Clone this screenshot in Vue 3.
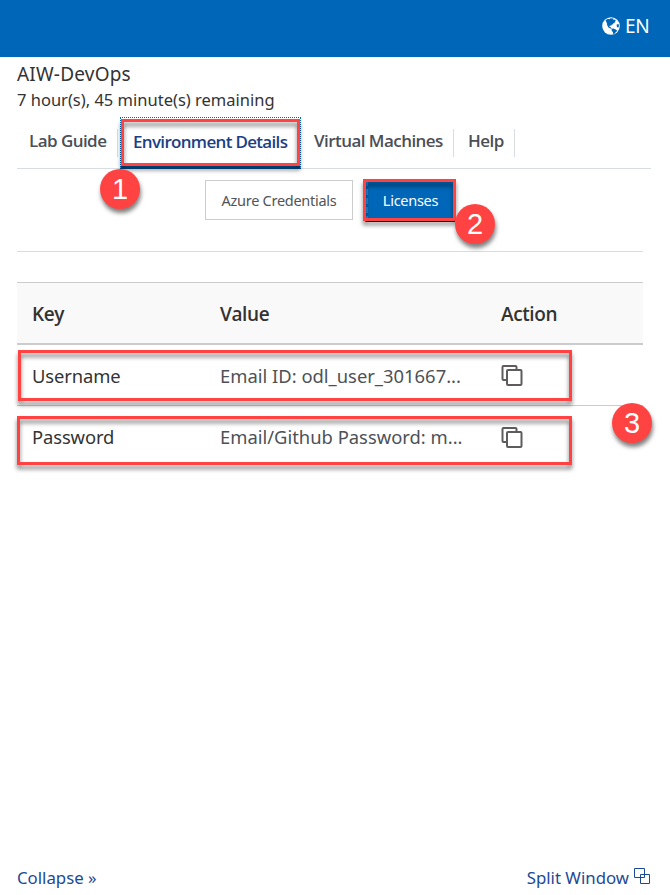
<script setup>
const tabs = [
  { id: 'guide', label: 'Lab Guide' },
  { id: 'env', label: 'Environment Details', active: true },
  { id: 'vms', label: 'Virtual Machines' },
  { id: 'help', label: 'Help' },
]
const rows = [
  { id: 'user', key: 'Username', value: 'Email ID: odl_user_301667...' },
  { id: 'pass', key: 'Password', value: 'Email/Github Password: m...' },
]
</script>

<template>
  <div class="page">
    <header class="topbar">
      <svg class="globe" viewBox="0 0 18 18">
        <circle cx="9" cy="9" r="8.8" fill="#fff" />
        <path d="M3.500 3.200 6 1.800l1.500.4 1-.9 3 .2-.8 1.100 1.800-.2 1.600 1.700-1.300.2.600 1-1.600.6-1 1.300-1.500.9.100 1-1-.6-1 .6.300 1 1-.2.300 1.200 1 .6 1.500-.3 1.600.9 1.900.9-.5 1.600-1.300.9-.9 1.300-1.100.3-.3-2.200-1.300-1.300.2-1.600-1.700-.9-1.700-.9-1.200-2.200-.4-2.300zM14.700 7.500l1.800-.6.5 2.200-.8 1.600-1.400-1z" fill="#0067b8" />
      </svg>
      <span class="lang">EN</span>
    </header>

    <section class="intro">
      <div class="title">AIW-DevOps</div>
      <div class="time">7 hour(s), 45 minute(s) remaining</div>
    </section>

    <nav class="tabs">
      <a v-for="t in tabs" :key="t.id" class="tab" :class="[t.id, { active: t.active }]">
        <span>{{ t.label }}</span>
        <i v-if="t.active" class="mark mark-tab"></i>
        <b v-if="t.active" class="badge badge-one">1</b>
      </a>
    </nav>

    <div class="subtabs">
      <button class="btn">Azure Credentials</button>
      <button class="btn primary">
        <span>Licenses</span>
        <i class="mark mark-btn"></i>
        <b class="badge badge-two">2</b>
      </button>
    </div>

    <div class="table">
      <div class="row head">
        <span class="cell">Key</span><span class="cell">Value</span><span class="cell">Action</span>
      </div>
      <div v-for="r in rows" :key="r.id" class="row" :class="r.id">
        <span class="cell name">{{ r.key }}</span>
        <span class="cell value">{{ r.value }}</span>
        <span class="cell">
          <svg class="copy" viewBox="0 0 22 22" fill="none" stroke="#5c5c5c" stroke-width="2">
            <path d="M5 16H2.500Q1.500 16 1.500 15V3Q1.500 2 2.500 2H14.500Q15.500 2 15.500 3V5" />
            <rect x="6" y="6" width="14.500" height="15" rx="1" />
          </svg>
        </span>
        <i class="mark mark-row"></i>
      </div>
      <b class="badge badge-three">3</b>
    </div>

    <footer class="footer">
      <a class="collapse">Collapse »</a>
      <a class="split"><span>Split Window</span>
        <svg class="windows" viewBox="0 0 17 17" fill="none" stroke="#1b4a96">
          <path d="M.5.5h10v9H.5zM6.500 6.500h9v9h-9z" />
        </svg>
      </a>
    </footer>
  </div>
</template>

<style>
body { background: #fff; }
</style>

<style scoped>
* { box-sizing: border-box; }
.page {
  width: 670px; height: 895px; display: flex; flex-direction: column;
  font-family: "Noto Sans", "Open Sans", sans-serif; color: #333; white-space: nowrap; overflow: hidden;
}
.topbar {
  height: 57px; flex: none; background: #0067b8; color: #fff; display: flex;
  align-items: center; padding: 0 0 5px 602px; gap: 5px;
}
.globe { width: 18px; height: 18px; flex: none; }
.lang { font-size: 19px; letter-spacing: -0.3px; }
.intro { padding: 4px 17px 0; height: 60px; flex: none; }
.title { font-size: 19px; line-height: 27px; letter-spacing: 0.2px; }
.time { font-size: 16.5px; line-height: 23px; }
.tabs {
  display: flex; flex: none; width: 634px; height: 52px; margin-left: 17px; border-bottom: 1px solid #dadce3;
}
.tab {
  position: relative; height: 28px; margin-top: 12px; border-right: 1px solid #dadce3;
  font-family: "Open Sans", "Noto Sans", sans-serif;
  font-size: 17px; font-weight: 600; line-height: 24px; color: #4b4f56; letter-spacing: -0.55px;
}
.guide { width: 101px; padding-left: 12px; }
.env { width: 181px; margin-left: 2px; padding-left: 12px; letter-spacing: -0.68px; }
.vms { width: 153px; padding-left: 13px; }
.help { width: 61px; padding-left: 14px; }
.tab.active {
  margin-top: 0; height: 52px; border: 1px dotted #0067b8; border-bottom: 3px solid #004e8c;
  color: #1b3f86; line-height: 48px;
}
.subtabs {
  display: flex; flex: none; gap: 12px; width: 626px; height: 83px; margin-left: 17px; padding: 11px 0 0 188px;
  border-bottom: 1px solid #dcdcdc;
}
.btn {
  position: relative; width: 148px; height: 40px; padding: 0 0 1px; border: 1px solid #ccc; background: #fff;
  font: 14.5px/36px "Noto Sans", "Open Sans", sans-serif; color: #505459; letter-spacing: -0.28px;
}
.primary {
  width: 90px; height: 42px; background: #0067b8; color: #fff; border: 0; border-left: 3px dashed #2386d4;
  border-bottom: 1px solid #000; padding: 0 2px 2px 0;
}
.table { position: relative; width: 626px; margin: 30px 0 0 17px; flex: none; }
.row {
  position: relative; display: grid; grid-template-columns: 188px 281px 1fr;
  padding-left: 15px; height: 61px; align-items: center; font-size: 18.4px; border-bottom: 1px solid #ccc;
}
.head {
  height: 63px; background: #f9f9f9; border-top: 1px solid #ccc; border-bottom: 2px solid #ccc; font-weight: 600;
  padding-top: 2px; font-family: "Open Sans", "Noto Sans", sans-serif; font-size: 19px; letter-spacing: -0.4px;
}
.pass { border-bottom: 0; }
.name { color: #333; letter-spacing: -0.12px; }
.value { color: #4d5157; }
.copy { width: 22px; height: 22px; display: block; }
.mark { position: absolute; border: 3px solid #ff4343; filter: drop-shadow(0 4px 2px rgba(0, 0, 0, .5)); }
.mark-tab { left: 0; top: 1px; width: 179px; height: 47px; }
.mark-btn { left: -5px; top: -1px; width: 93px; height: 42px; }
.mark-row { left: 0; top: 5px; width: 555px; height: 51px; }
.user .mark-row { left: 1px; width: 554px; }
.pass .mark-row { top: 10px; height: 49px; }
.badge {
  position: absolute; z-index: 2; width: 40px; height: 40px; border-radius: 50%; background: #ff4343; color: #fff;
  font: 400 29px/40px "Liberation Sans", Arial, sans-serif; text-align: center; letter-spacing: 0;
  box-shadow: 1px 4px 4px rgba(0, 0, 0, .5);
}
.badge-one { left: -21px; top: 51px; }
.badge-two { left: 87px; top: 24px; }
.badge-three { left: 595px; top: 121px; }
.footer {
  margin-top: auto; display: flex; justify-content: space-between; padding: 0 19px 5px 17px;
  color: #1b4a96; font-size: 16.8px; line-height: 24px; letter-spacing: 0;
}
.split { display: flex; gap: 5px; }
.windows { width: 17px; height: 17px; margin-top: 2px; }
</style>
